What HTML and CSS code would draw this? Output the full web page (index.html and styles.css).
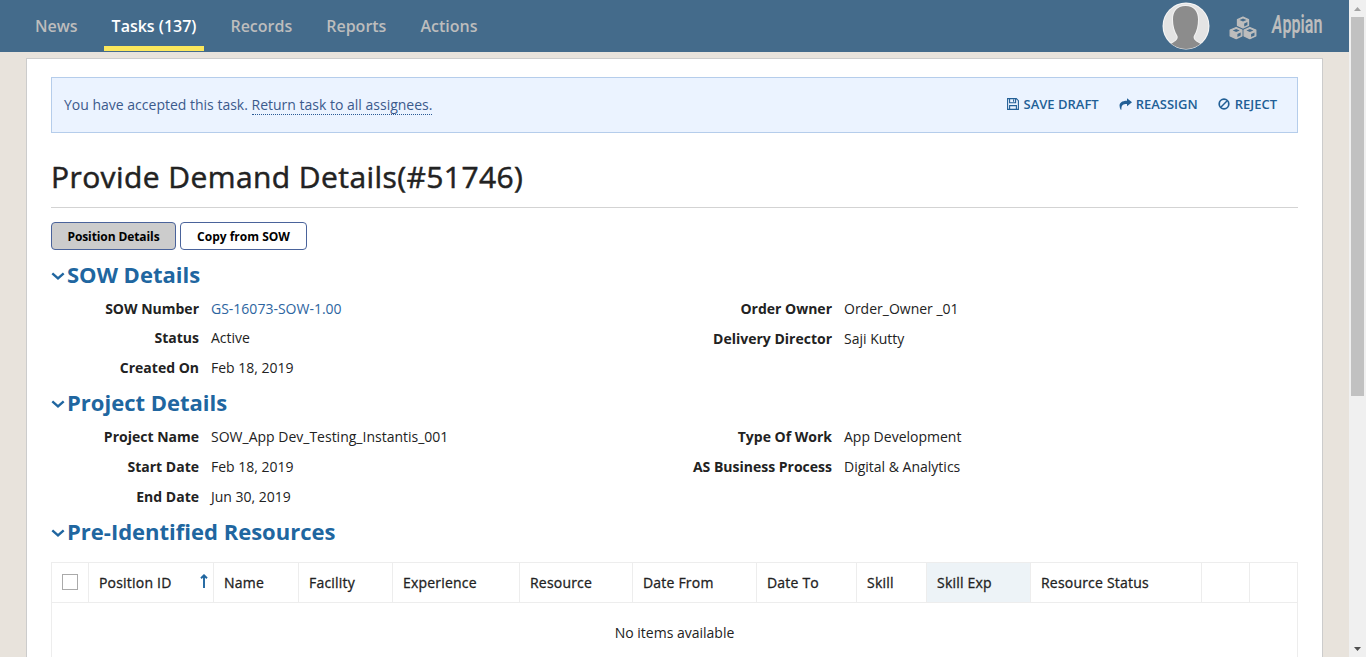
FILE: index.html
```html
<!DOCTYPE html>
<html lang="en">
<head>
<meta charset="utf-8">
<title>Provide Demand Details</title>
<link rel="stylesheet" href="styles.css">
</head>
<body>
<div class="window">
  <div class="page">
    <header class="topbar">
      <nav class="tabs">
        <a class="tab tab-news"><span>News</span></a>
        <a class="tab tab-active"><span>Tasks (137)</span></a>
        <a class="tab tab-records"><span>Records</span></a>
        <a class="tab tab-reports"><span>Reports</span></a>
        <a class="tab tab-actions"><span>Actions</span></a>
      </nav>
      <div class="tools">
        <svg class="avatar" viewBox="0 0 48 48">
          <defs>
            <clipPath id="round"><circle cx="24" cy="24" r="23"/></clipPath>
          </defs>
          <circle cx="24" cy="24" r="23.500" fill="#f6f6f6"/>
          <g clip-path="url(#round)">
            <circle cx="24" cy="24" r="22.500" fill="#e4e4e4"/>
            <path id="bust" d="M23.500 4C15 4 11 9.500 11 17.500c0 6 1.500 12 4.500 16.500.8 3-1 5-8 8.500v6h32v-6c-7-3.500-8.500-5.500-7.700-8.500 3-4.500 4.200-10.500 4.200-16.500C36 9.500 32 4 23.500 4z" fill="#8c8c8c" stroke="#f2f2f2" stroke-width="2" paint-order="stroke"/>
          </g>
        </svg>
        <svg class="cubes" viewBox="0 0 28 24">
          <g fill="#bdbdbd" stroke="#bdbdbd" stroke-width="1.300" stroke-linejoin="round">
            <path d="M14 1.200 19.500 3.500v6L14 12 8.500 9.500v-6z"/>
            <path d="M7.200 11.500 12.900 14v6l-5.700 2.700L1.200 20v-6z"/>
            <path d="M20.800 11.500 26.800 14v6l-6 2.700L15.100 20v-6z"/>
          </g>
          <g fill="#446b8b">
            <path d="M14 2.500 17.500 4 14 5.500 10.500 4zM15.200 7.400 18.400 6v3L15.200 10.500z"/>
            <path d="M7.200 12.900 10.700 14.400 7.200 15.900 3.700 14.400zM8.400 17.900 11.700 16.500v3L8.400 21z"/>
            <path d="M20.900 12.900 24.400 14.400 20.900 15.900 17.400 14.400zM22.100 17.900 25.500 16.500v3L22.100 21z"/>
          </g>
        </svg>
        <div class="brand"><span><i>A</i>ppian</span></div>
      </div>
    </header>
    <main class="card">
      <div class="notice">
        <p class="notice-text">You have accepted this task. <a class="return-link">Return task to all assignees.</a></p>
        <div class="notice-actions">
          <a class="action"><svg class="i-save" viewBox="0 0 12 12"><path d="M.6.600h8.700l2.100 2.100v8.700H.6zM2.600.800v4h6v-4M2.600 11.200V7.600h6.800v3.600M6.600 1.500v2.200" fill="none" stroke="#225f96" stroke-width="1.100"/></svg><span>SAVE DRAFT</span></a>
          <a class="action"><svg class="i-share" viewBox="0 0 13 12"><path d="M8 .3 13 4.300 8 8.300V6C4.200 5.900 2.200 7 2.400 11.700H1.700C-.8 7 .5 2.800 8 2.700z" fill="#225f96"/></svg><span>REASSIGN</span></a>
          <a class="action"><svg class="i-ban" viewBox="0 0 12 12"><circle cx="6" cy="6" r="4.800" fill="none" stroke="#225f96" stroke-width="1.700"/><path d="M2.800 9.200 9.200 2.800" stroke="#225f96" stroke-width="1.500"/></svg><span>REJECT</span></a>
        </div>
      </div>
      <h1 class="title"><span>Provide Demand Details(#51746)</span></h1>
      <div class="buttons">
        <button class="btn btn-on"><span>Position Details</span></button>
        <button class="btn btn-copy"><span>Copy from SOW</span></button>
      </div>

      <section class="section">
        <h2 class="heading"><svg class="chev" viewBox="0 0 14 10"><path d="m1.300 2.300 5.700 5 5.700-5" fill="none" stroke="#2066a0" stroke-width="2.400"/></svg><span>SOW Details</span></h2>
        <div class="columns">
          <dl class="fields fields-sow">
            <dt>SOW Number</dt><dd class="link">GS-16073-SOW-1.00</dd>
            <dt>Status</dt><dd>Active</dd>
            <dt>Created On</dt><dd>Feb 18, 2019</dd>
          </dl>
          <dl class="fields fields-right">
            <dt>Order Owner</dt><dd>Order_Owner _01</dd>
            <dt>Delivery Director</dt><dd>Saji Kutty</dd>
          </dl>
        </div>
      </section>
      <section class="section section-project">
        <h2 class="heading"><svg class="chev" viewBox="0 0 14 10"><path d="m1.300 2.300 5.700 5 5.700-5" fill="none" stroke="#2066a0" stroke-width="2.400"/></svg><span>Project Details</span></h2>
        <div class="columns">
          <dl class="fields">
            <dt>Project Name</dt><dd>SOW_App Dev_Testing_Instantis_001</dd>
            <dt>Start Date</dt><dd>Feb 18, 2019</dd>
            <dt>End Date</dt><dd>Jun 30, 2019</dd>
          </dl>
          <dl class="fields fields-right">
            <dt>Type Of Work</dt><dd>App Development</dd>
            <dt>AS Business Process</dt><dd>Digital &amp; Analytics</dd>
          </dl>
        </div>
      </section>
      <section>
        <h2 class="heading"><svg class="chev" viewBox="0 0 14 10"><path d="m1.300 2.300 5.700 5 5.700-5" fill="none" stroke="#2066a0" stroke-width="2.400"/></svg><span>Pre-Identified Resources</span></h2>
        <div class="grid">
          <div class="grid-head">
            <div class="cell cell-check"><i class="checkbox"></i></div>
            <div class="cell cell-sort"><span>Position ID</span><svg class="sort" viewBox="0 0 8 14"><path d="M4 14V2M1 4.200 4 1.300l3 2.900" fill="none" stroke="#2066a0" stroke-width="1.900"/></svg></div>
            <div class="cell">Name</div>
            <div class="cell">Facility</div>
            <div class="cell">Experience</div>
            <div class="cell">Resource</div>
            <div class="cell">Date From</div>
            <div class="cell">Date To</div>
            <div class="cell">Skill</div>
            <div class="cell cell-hover">Skill Exp</div>
            <div class="cell">Resource Status</div>
            <div class="cell"></div>
            <div class="cell"></div>
          </div>
          <div class="empty">No items available</div>
        </div>
      </section>
    </main>
  </div>
  <div class="scrollbar">
    <svg class="arrow" viewBox="0 0 17 17"><path d="m5 11 3.500-4 3.500 4z" fill="#a3a3a3"/></svg>
    <div class="thumb"></div>
    <svg class="arrow arrow-down" viewBox="0 0 17 17"><path d="m5 7 3.500 4 3.500-4z" fill="#505050"/></svg>
  </div>
</div>
</body>
</html>
```
FILE: styles.css
```css
* { box-sizing: border-box; }
body { margin: 0; overflow: hidden; font: 14px/20px "Open Sans", sans-serif; color: #222; }
h1, h2, p, dl, dd { margin: 0; }
.window { display: flex; height: 657px; overflow: hidden; }
.page { width: 1349px; background: #e8e3dc; overflow: hidden; }

.topbar { display: flex; justify-content: space-between; height: 52px; background: #446b8b; }
.tabs { display: flex; padding-left: 27px; gap: 18px; }
.tab { height: 51px; padding: 0 8px; line-height: 52px; font-size: 16px; font-weight: 600; color: #bdbdbd; border-bottom: 5px solid transparent; white-space: nowrap; }
.tab-active { color: #fff; border-color: #fbe75c; }
.tools { display: flex; align-items: center; padding-right: 26px; }
.avatar { width: 48px; height: 48px; }
.cubes { width: 28px; height: 24px; margin: 4px 0 0 19px; }
.brand { width: 51px; margin: 0 0 2px 15px; font: 600 25px/50px Roboto, sans-serif; color: #bdbdbd; }
.brand span { display: inline-block; transform: scaleX(.645); transform-origin: 0 50%; }

.card { width: 1297px; height: 700px; margin: 6px 0 0 26px; padding: 18px 24px; background: #fff; border: 1px solid #ccc; }
.notice { display: flex; align-items: center; justify-content: space-between; height: 56px; padding: 0 20px 0 12px; background: #ebf3ff; border: 1px solid #b5cdeb; color: #3b5a8c; }
.return-link { display: inline-block; line-height: 19px; border-bottom: 1px dotted #2a5a96; }
.notice-actions { display: flex; gap: 20px; margin-bottom: 2px; font-size: 13px; font-weight: 600; color: #225f96; }
.action { display: flex; align-items: center; gap: 5px; }
.i-save, .i-ban { width: 12px; height: 12px; }
.i-share { width: 13px; height: 12px; }
.action:nth-child(2) { gap: 4px; }

.title { height: 75px; padding-top: 24px; font: 400 30px/40px "Open Sans", sans-serif; letter-spacing: .42px; -webkit-text-stroke: .5px #222; border-bottom: 1px solid #d3d3d3; white-space: nowrap; }
.buttons { display: flex; gap: 4px; margin: 14px 0 7px; }
.btn { width: 125px; height: 28px; padding: 2px 0 0; border: 1px solid #4a639b; border-radius: 4px; background: #fff; color: #000; font: bold 12px/24px "Open Sans", sans-serif; }
.btn-copy { width: 127px; }
.btn-on { background: #ccc; letter-spacing: -.1px; }

.section { height: 128px; }
.section-project { height: 129px; }
.heading { display: flex; align-items: center; height: 34px; gap: 2px; font-size: 22px; line-height: 34px; font-weight: 700; color: #2066a0; white-space: nowrap; }
.chev { width: 14px; height: 10px; margin-top: 3px; }
.columns { display: flex; padding-top: 3px; }
.fields { display: grid; grid-template-columns: 148px 1fr; grid-auto-rows: 30px; align-content: start; column-gap: 12px; width: 633px; line-height: 30px; white-space: nowrap; }
.fields-sow { grid-template-rows: 29px 30px 30px; }
.fields-right { width: 614px; }
.fields dt { font-weight: 700; text-align: right; }
.fields .link { color: #2d659f; }

.grid { margin-top: 14px; border: 1px solid #ededed; height: 200px; }
.grid-head { display: grid; grid-template-columns: 36px 125px 85px 94px 127px 113px 124px 100px 70px 104px 171px 48px 48px; height: 40px; border-bottom: 1px solid #ededed; }
.cell { padding-left: 10px; border-left: 1px solid #ededed; letter-spacing: .2px; -webkit-text-stroke: .3px #222; line-height: 39px; white-space: nowrap; }
.cell-check { border-left: 0; display: flex; align-items: center; }
.checkbox { width: 16px; height: 16px; margin-bottom: 1px; border: 1px solid #aaa; }
.cell-sort { display: flex; justify-content: space-between; padding-right: 5px; }
.sort { width: 8px; height: 14px; margin-top: 11px; }
.cell-hover { background: #edf3f7; }
.empty { padding-top: 20px; text-align: center; }

.scrollbar { display: flex; flex-direction: column; align-items: center; width: 17px; background: #f0f0f0; }
.arrow { display: block; width: 17px; height: 17px; }
.thumb { width: 13px; height: 379px; background: #c1c1c1; }
.arrow-down { margin-top: auto; }
```
